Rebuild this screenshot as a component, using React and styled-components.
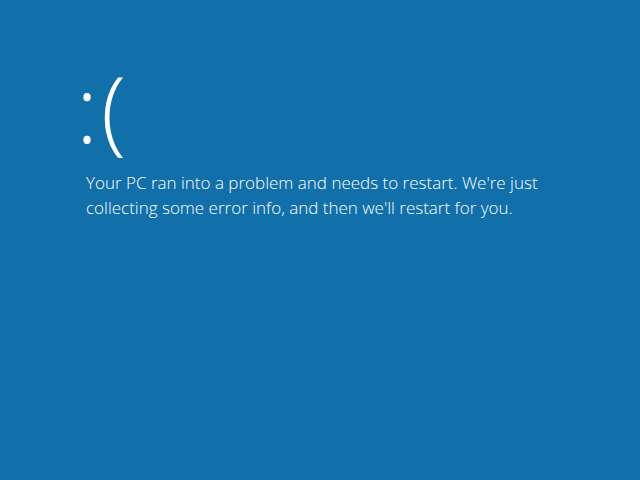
import React from 'react';
import styled, { createGlobalStyle } from 'styled-components';

const GlobalStyle = createGlobalStyle`
html, body {
    margin: 0;
    padding: 0;
    background-color: #1170aa;
}
`

const Screen = styled.div`
box-sizing: border-box;
width: 100%;
height: 480px;
background-color: #1170aa;
color: #fff;
font-family: "Open Sans", "Noto Sans", sans-serif;
font-variant-ligatures: none;
padding: 58px 0 0 86px;
`
const Face = styled.div`
font-size: 92px;
font-weight: 300;
line-height: 100px;
letter-spacing: 3px;
margin-left: -10px;
`
const Message = styled.p`
margin: 12px 0 0;
font-size: 17px;
font-weight: 300;
line-height: 25px;
max-width: 480px;
`

const App = () => {
    return (
        <>
            <GlobalStyle />
            <Screen>
                <Face>:(</Face>
                <Message>
                    Your PC ran into a problem and needs to restart. We're just collecting some error info, and then we'll restart for you.
                </Message>
            </Screen>
        </>
    )
}

export default App
